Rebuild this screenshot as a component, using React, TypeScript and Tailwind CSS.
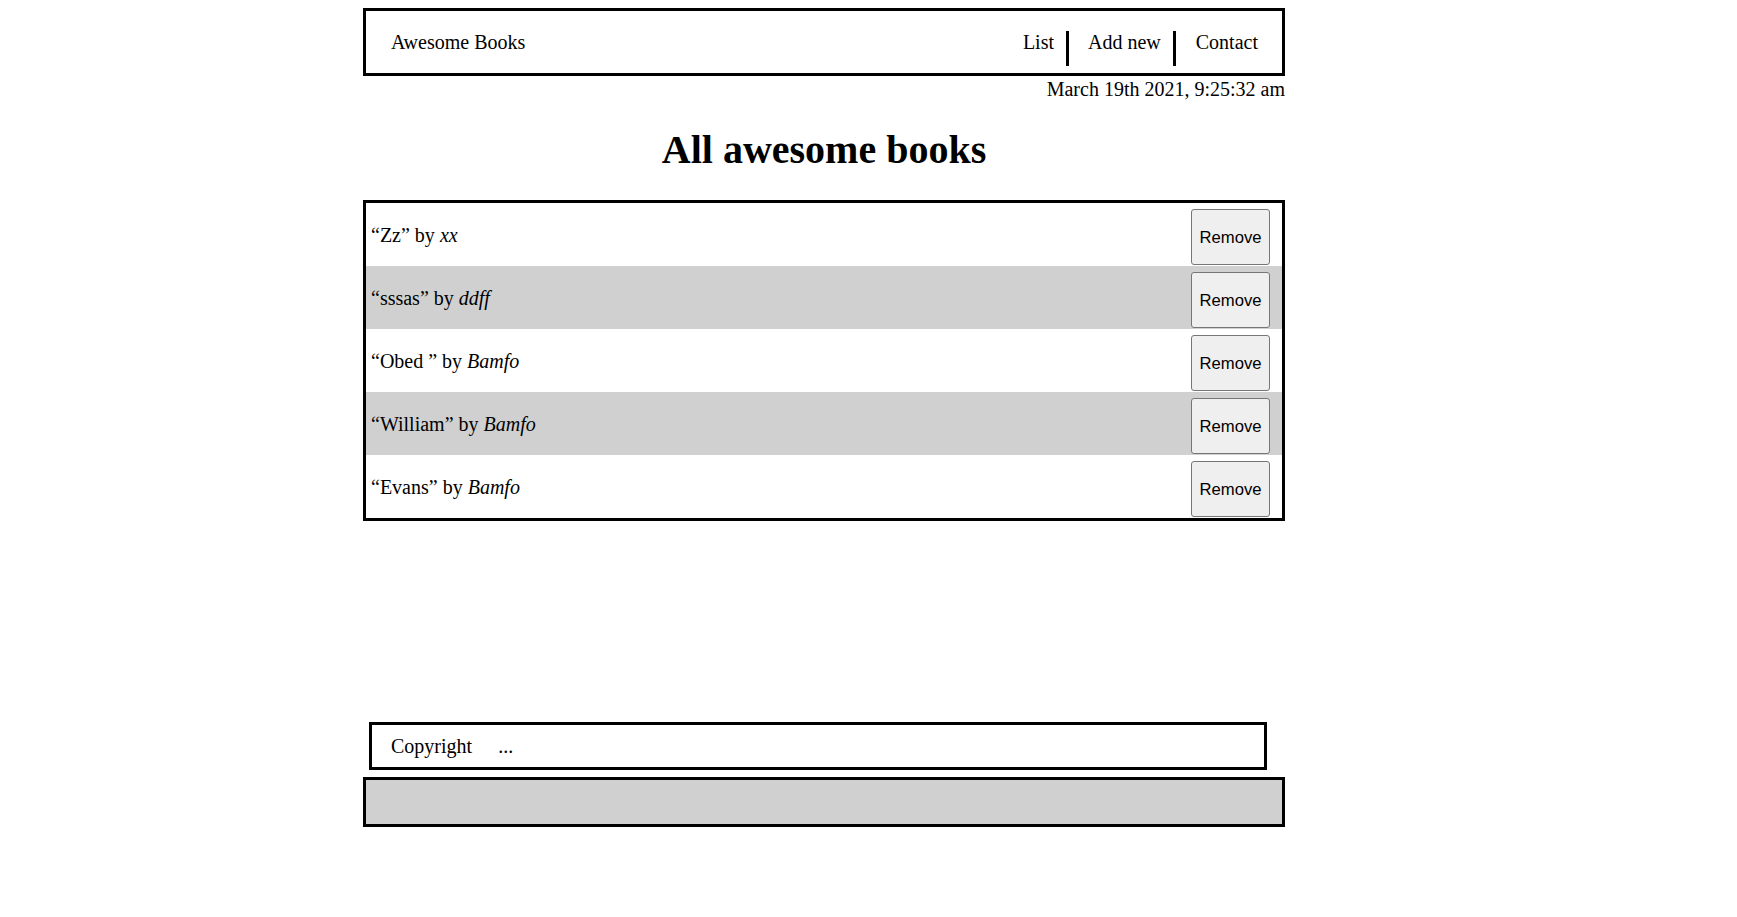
import React from "react";

const books = [
  { title: "Zz", author: "xx" },
  { title: "sssas", author: "ddff" },
  { title: "Obed ", author: "Bamfo" },
  { title: "William", author: "Bamfo" },
  { title: "Evans", author: "Bamfo" },
];

export default function App() {
  return (
    <div className="min-h-screen bg-white text-black font-['Liberation_Serif',serif]">
      <div className="ml-[363px] w-[922px] pt-[8px]">
        <header className="h-[68px] border-[3px] border-black flex items-center justify-between pl-[25px] pr-[24px] text-[20px] leading-[23px]">
          <span>Awesome Books</span>
          <nav className="flex items-center h-full">
            <span className="mr-[12px]">List</span>
            <span className="self-end mb-[7px] h-[35px] w-[3px] bg-black" />
            <span className="ml-[19px] mr-[12px]">Add new</span>
            <span className="self-end mb-[7px] h-[35px] w-[3px] bg-black" />
            <span className="ml-[20px]">Contact</span>
          </nav>
        </header>
        <div className="pt-[2px] text-right text-[20px] leading-[23px]">
          March 19th 2021, 9:25:32 am
        </div>
        <h1 className="mt-[26px] text-center text-[40px] leading-[46px] font-bold">
          All awesome books
        </h1>
        <div className="mt-[27px] border-[3px] border-black">
          {books.map((b, i) => (
            <div
              key={i}
              className={`h-[63px] flex items-start justify-between pl-[5px] pr-[12px] ${
                i % 2 === 1 ? "bg-[#d0d0d0]" : "bg-white"
              }`}
            >
              <span className="self-center pt-[1px] text-[20px] leading-[23px]">
                “{b.title}” by <i>{b.author}</i>
              </span>
              <button className="mt-[6px] h-[56px] w-[79px] rounded-[3px] border border-[#767676] bg-[#efefef] text-[16.67px] text-black font-['Liberation_Sans',Arial,sans-serif]">
                Remove
              </button>
            </div>
          ))}
        </div>
        <footer className="ml-[6px] mt-[201px] w-[898px] h-[48px] border-[3px] border-black flex items-center pl-[19px] text-[20px] leading-[23px]">
          <span>Copyright</span>
          <span className="ml-[26px]">...</span>
        </footer>
        <div className="mt-[7px] h-[50px] border-[3px] border-black bg-[#d0d0d0]" />
      </div>
    </div>
  );
}
